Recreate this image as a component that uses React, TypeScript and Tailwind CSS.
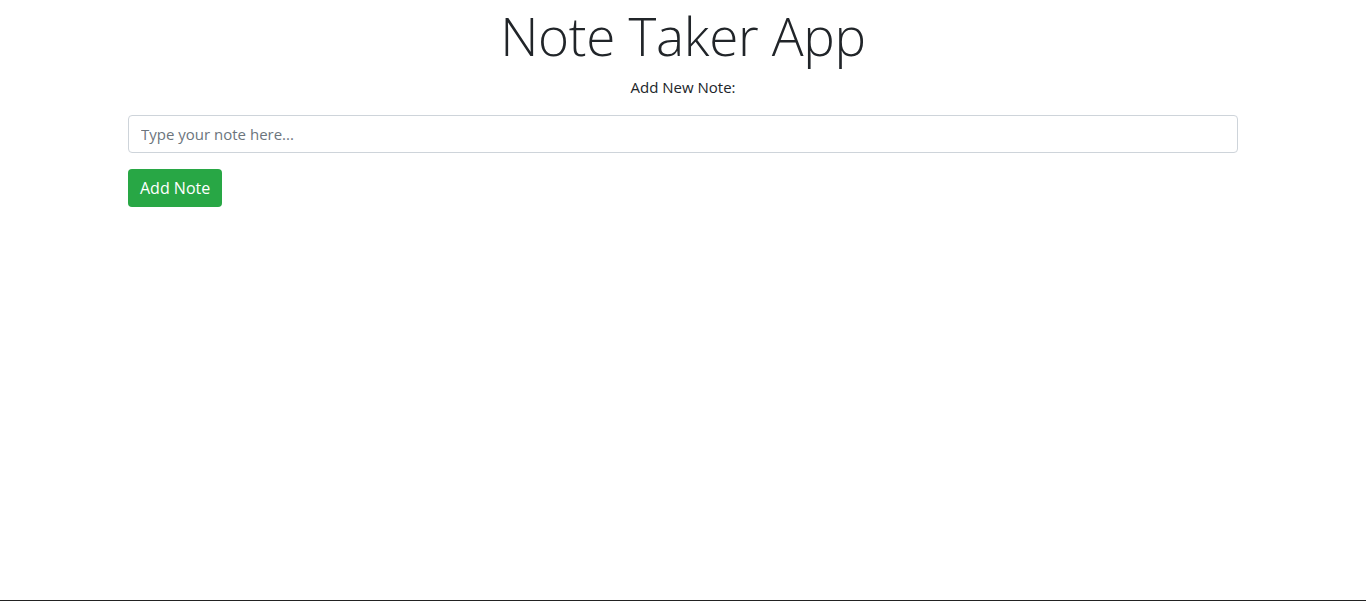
import { useState } from "react"

export default function App() {
  const [note, setNote] = useState("")
  const [notes, setNotes] = useState<string[]>([])

  const addNote = () => {
    if (!note.trim()) return
    setNotes((prev) => [...prev, note])
    setNote("")
  }

  return (
    <div
      className="h-[601px] border-b border-[#222] bg-white text-[#212529]"
      style={{ fontFamily: '"Open Sans", "Noto Sans", sans-serif' }}
    >
      <div className="mx-auto w-[1140px] px-[15px]">
        <h1 className="pt-[3px] text-center text-[53px] font-light leading-[66px] tracking-[-0.3px] text-[#212529]">
          Note Taker App
        </h1>
        <div className="mt-[6px] text-center text-[15px] leading-[24px]">
          Add New Note:
        </div>
        <input
          value={note}
          onChange={(e) => setNote(e.target.value)}
          placeholder="Type your note here..."
          className="mt-[16px] block h-[38px] w-full rounded-[4px] border border-[#ced4da] bg-white px-3 text-[15px] text-[#495057] outline-none placeholder:text-[#6c757d]"
        />
        <button
          onClick={addNote}
          className="mt-4 h-[38px] rounded-[4px] bg-[#28a745] px-3 text-[16px] text-white"
        >
          Add Note
        </button>
        <ul className="mt-4">
          {notes.map((n, i) => (
            <li key={i} className="border-b border-[#dee2e6] py-2">
              {n}
            </li>
          ))}
        </ul>
      </div>
    </div>
  )
}
